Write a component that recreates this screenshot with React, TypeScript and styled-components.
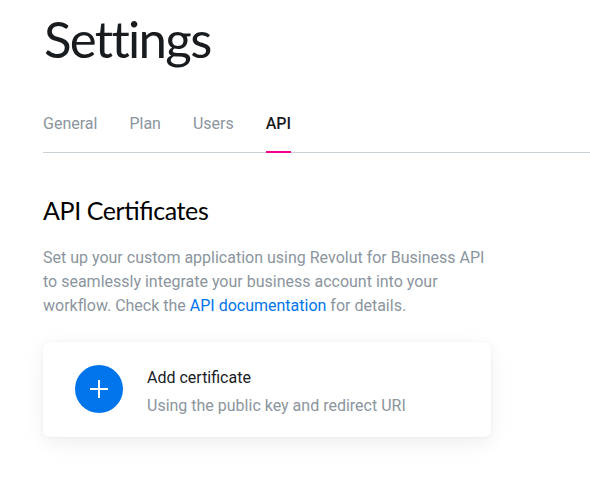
import React from 'react';
import styled, { createGlobalStyle } from 'styled-components';

const GlobalStyle = createGlobalStyle`
  body {
    margin: 0;
    background: #fff;
    color: #191c1f;
    font: 400 16px/24px Roboto, sans-serif;
    overflow: hidden;
  }
`;

const Page = styled.main`
  box-sizing: border-box;
  height: 484px;
  padding: 7px 0 0 43px;
  overflow: hidden;
`;

const Title = styled.h1`
  margin: 0;
  padding-left: 1px;
  height: 64px;
  font: 400 51px/64px Lato, sans-serif;
  letter-spacing: -1.7px;
  white-space: nowrap;
`;

const Tabs = styled.nav`
  display: flex;
  gap: 32px;
  box-sizing: border-box;
  height: 41px;
  margin-top: 41px;
  box-shadow: inset 0 -1px #c9d0d6;
`;

const Tab = styled.a<{ $active?: boolean }>`
  box-sizing: border-box;
  color: ${({ $active }) => ($active ? '#191c1f' : '#8b959e')};
  font-weight: ${({ $active }) => ($active ? 500 : 400)};
  border-bottom: 2px solid ${({ $active }) => ($active ? '#f5008f' : 'transparent')};
`;

const Section = styled.section`
  width: 448px;
  padding-top: 41px;
`;

const Heading = styled.h2`
  margin: 0;
  color: #000;
  font: 400 25px/32px Lato, sans-serif;
  letter-spacing: -0.4px;
  font-feature-settings: 'liga' 1;
  white-space: nowrap;
`;

const Description = styled.p`
  margin: 20px 0 0;
  color: #8b959e;
`;

const Link = styled.a`
  color: #0075eb;
`;

const Card = styled.button`
  display: flex;
  align-items: flex-start;
  gap: 24px;
  box-sizing: border-box;
  width: 100%;
  height: 95px;
  margin: 24px 0 0;
  padding: 23px 32px;
  border: 0;
  border-radius: 6px;
  background: #fff;
  box-shadow: 0 0 2px rgba(0, 0, 0, 0.08), 0 6px 20px rgba(0, 0, 0, 0.07);
  font: inherit;
  text-align: left;
`;

const Badge = styled.span`
  display: flex;
  align-items: center;
  justify-content: center;
  width: 48px;
  height: 48px;
  border-radius: 50%;
  background: #0075eb;
`;

const CardText = styled.span`
  display: flex;
  flex-direction: column;
  gap: 4px;
  padding-top: 1px;
`;

const CardTitle = styled.span`
  color: #191c1f;
`;

const CardHint = styled.span`
  color: #8b959e;
`;

const tabs = ['General', 'Plan', 'Users', 'API'];

export default function App() {
  return (
    <>
      <GlobalStyle />
      <Page>
        <Title>Settings</Title>
        <Tabs>
          {tabs.map((tab) => (
            <Tab key={tab} $active={tab === 'API'}>{tab}</Tab>
          ))}
        </Tabs>
        <Section>
          <Heading>API Certificates</Heading>
          <Description>
            Set up your custom application using Revolut for Business API
            <br />
            to seamlessly integrate your business account into your
            <br />
            workflow. Check the <Link>API documentation</Link> for details.
          </Description>
          <Card>
            <Badge>
              <svg width="18" height="18" viewBox="0 0 18 18" fill="#fff">
                <path d="M8 0h2v8h8v2h-8v8H8v-8H0V8h8z" />
              </svg>
            </Badge>
            <CardText>
              <CardTitle>Add certificate</CardTitle>
              <CardHint>Using the public key and redirect URI</CardHint>
            </CardText>
          </Card>
        </Section>
      </Page>
    </>
  );
}
